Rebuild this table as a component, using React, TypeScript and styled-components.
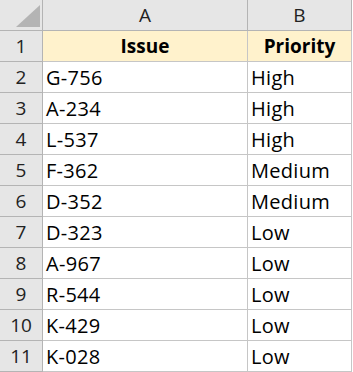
import React from "react";
import styled, { createGlobalStyle } from "styled-components";

const Global = createGlobalStyle`
  html, body { margin: 0; padding: 0; background: #ffffff; }
  body { font-family: "Open Sans", "Liberation Sans", sans-serif; }
`;

const Sheet = styled.div`
  display: grid;
  grid-template-columns: 43px 205px 104px;
  grid-auto-rows: 31px;
  width: 352px;
`;

const Cell = styled.div<{ $align?: "left" | "center"; $bold?: boolean; $bg?: string }>`
  box-sizing: border-box;
  border-right: 1px solid #c6c6c6;
  border-bottom: 1px solid #c6c6c6;
  background: ${(p) => p.$bg ?? "#ffffff"};
  display: flex;
  align-items: center;
  justify-content: ${(p) => (p.$align === "center" ? "center" : "flex-start")};
  padding: 0 3px;
  font-size: ${(p) => (p.$bold ? "19px" : "20px")};
  letter-spacing: ${(p) => (p.$bold ? "0" : "0.3px")};
  font-weight: ${(p) => (p.$bold ? 700 : 400)};
  color: #000000;
  white-space: nowrap;
  overflow: hidden;
`;

const HeadCell = styled.div`
  box-sizing: border-box;
  border-right: 1px solid #b4b4b4;
  border-bottom: 1px solid #b4b4b4;
  background: #e6e6e6;
  display: flex;
  align-items: center;
  justify-content: center;
  font-size: 19px;
  color: #222222;
`;

const Corner = styled(HeadCell)`
  align-items: flex-end;
  justify-content: flex-end;
  padding: 0 2px 3px 0;
`;

const rows: [string, string][] = [
  ["G-756", "High"],
  ["A-234", "High"],
  ["L-537", "High"],
  ["F-362", "Medium"],
  ["D-352", "Medium"],
  ["D-323", "Low"],
  ["A-967", "Low"],
  ["R-544", "Low"],
  ["K-429", "Low"],
  ["K-028", "Low"],
];

export default function App() {
  return (
    <>
      <Global />
      <Sheet>
        <Corner>
          <svg width="24" height="22" viewBox="0 0 24 22">
            <polygon points="0,22 24,22 24,0" fill="#b4b4b4" />
          </svg>
        </Corner>
        <HeadCell>A</HeadCell>
        <HeadCell>B</HeadCell>

        <HeadCell>1</HeadCell>
        <Cell $align="center" $bold $bg="#fff2cc">Issue</Cell>
        <Cell $align="center" $bold $bg="#fff2cc">Priority</Cell>

        {rows.map(([issue, prio], i) => (
          <React.Fragment key={issue}>
            <HeadCell>{i + 2}</HeadCell>
            <Cell>{issue}</Cell>
            <Cell>{prio}</Cell>
          </React.Fragment>
        ))}
      </Sheet>
    </>
  );
}
